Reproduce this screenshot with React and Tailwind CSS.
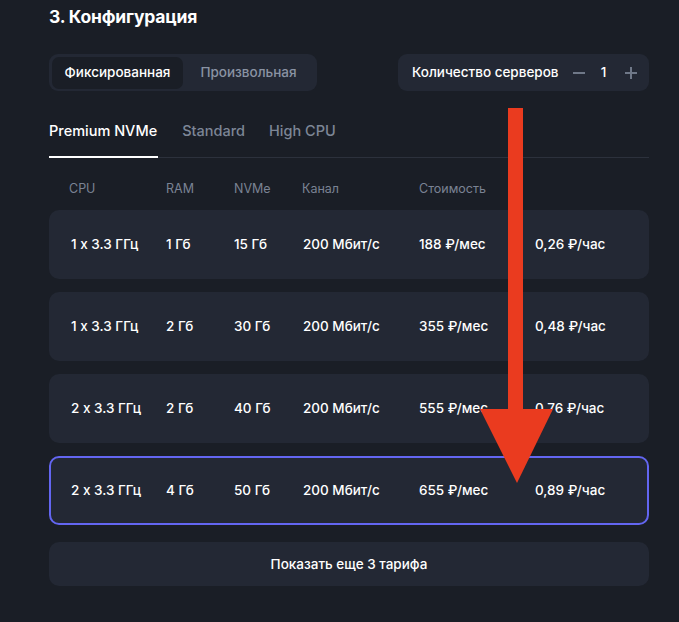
import React from "react";

const rows = [
  ["1 x 3.3 ГГц", "1 Гб", "15 Гб", "200 Мбит/с", "188 ₽/мес", "0,26 ₽/час"],
  ["1 x 3.3 ГГц", "2 Гб", "30 Гб", "200 Мбит/с", "355 ₽/мес", "0,48 ₽/час"],
  ["2 x 3.3 ГГц", "2 Гб", "40 Гб", "200 Мбит/с", "555 ₽/мес", "0,76 ₽/час"],
  ["2 x 3.3 ГГц", "4 Гб", "50 Гб", "200 Мбит/с", "655 ₽/мес", "0,89 ₽/час"],
];

const cols = "grid grid-cols-[95px_68px_69px_116px_116px_1fr] items-center";

export default function App() {
  return (
    <div
      className="relative w-[679px] h-[622px] bg-[#1a1e26] overflow-hidden text-[#eef0f4] [font-feature-settings:'calt'_0]"
      style={{ fontFamily: "Inter, 'Noto Sans', sans-serif" }}
    >
      <div className="w-[600px] ml-[49px] pt-[5px]">
        <h2 className="text-[17.5px] leading-[24px] font-bold tracking-[-0.2px] text-white">3. Конфигурация</h2>

        <div className="mt-[25px] flex items-center justify-between">
          <div className="flex items-center h-[37px] w-[268px] p-[3px] rounded-[9px] bg-[#232834]">
            <div className="h-[32px] w-[131px] rounded-[7px] bg-[#1a1e26] flex items-center justify-center text-[13.5px] font-medium text-white">
              Фиксированная
            </div>
            <div className="flex-1 flex items-center justify-center text-[13.5px] font-medium text-[#8a93a3]">
              Произвольная
            </div>
          </div>
          <div className="flex items-center h-[37px] w-[251px] rounded-[9px] bg-[#232834] pl-[14px] text-[13.5px] font-medium">
            <span className="text-white">Количество серверов</span>
            <span className="ml-[14px] w-[12px] h-[2px] bg-[#6f7888]" />
            <span className="ml-[16px] text-white w-[6px] text-center">1</span>
            <span className="ml-[18px] relative w-[12px] h-[12px]">
              <span className="absolute left-0 top-[5px] w-[12px] h-[2px] bg-[#6f7888]" />
              <span className="absolute top-0 left-[5px] w-[2px] h-[12px] bg-[#6f7888]" />
            </span>
          </div>
        </div>

        <div className="mt-[26px] flex border-b border-[#2c313c] h-[41px]">
          <div className="relative pr-[1px] text-[14.5px] font-medium text-white leading-[20px] pt-[4px]">
            Premium NVMe
            <span className="absolute left-0 right-0 bottom-[-1px] h-[2px] bg-white" />
          </div>
          <div className="ml-[24px] text-[14.5px] font-medium text-[#7d8696] leading-[20px] pt-[4px]">Standard</div>
          <div className="ml-[24px] text-[14.5px] font-medium text-[#7d8696] leading-[20px] pt-[4px]">High CPU</div>
        </div>

        <div className="grid grid-cols-[97px_68px_68px_117px_116px_1fr] items-center pl-[20px] mt-[21px] h-[20px] text-[12.5px] text-[#7a8394]">
          <span>CPU</span>
          <span>RAM</span>
          <span>NVMe</span>
          <span>Канал</span>
          <span>Стоимость</span>
          <span />
        </div>

        <div className="mt-[11px] flex flex-col gap-[13px]">
          {rows.map((r, i) => (
            <div
              key={i}
              className={`${cols} h-[69px] rounded-[10px] bg-[#232834] text-[13.5px] font-medium text-white ${
                i === 3 ? "border-2 border-[#6366f1] pl-[20px]" : "pl-[22px]"
              }`}
            >
              {r.map((c, j) => (
                <span key={j}>{c}</span>
              ))}
            </div>
          ))}
        </div>

        <div className="mt-[17px] h-[44px] rounded-[10px] bg-[#232834] flex items-center justify-center text-[13.5px] font-medium text-white">
          Показать еще 3 тарифа
        </div>
      </div>

      <svg className="absolute left-0 top-0 pointer-events-none" width="679" height="622">
        <rect x="508" y="108" width="15" height="303" fill="#ea3b1f" />
        <polygon points="480,409 553,409 517,483" fill="#ea3b1f" />
      </svg>
    </div>
  );
}
